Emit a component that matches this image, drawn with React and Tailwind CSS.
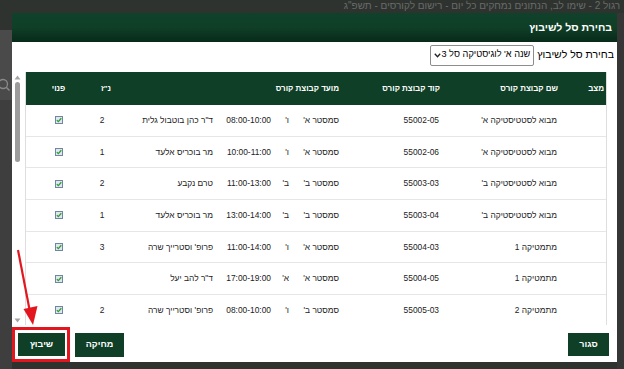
import React from 'react'

const ROWS = [
  { name: "מבוא לסטטיסטיקה א'", code: '55002-05', sem: "סמסטר א'", day: "ו'", time: '08:00-10:00', lect: 'ד"ר כהן בוטבול גלית', nz: '2' },
  { name: "מבוא לסטטיסטיקה א'", code: '55002-06', sem: "סמסטר א'", day: "ו'", time: '10:00-11:00', lect: 'מר בוכריס אלעד', nz: '1' },
  { name: "מבוא לסטטיסטיקה ב'", code: '55003-03', sem: "סמסטר ב'", day: "ב'", time: '11:00-13:00', lect: 'טרם נקבע', nz: '2' },
  { name: "מבוא לסטטיסטיקה ב'", code: '55003-04', sem: "סמסטר ב'", day: "ב'", time: '13:00-14:00', lect: 'מר בוכריס אלעד', nz: '1' },
  { name: 'מתמטיקה 1', code: '55004-03', sem: "סמסטר א'", day: "ו'", time: '11:00-14:00', lect: "פרופ' וסטרייך שרה", nz: '3' },
  { name: 'מתמטיקה 1', code: '55004-05', sem: "סמסטר א'", day: "א'", time: '17:00-19:00', lect: 'ד"ר להב יעל', nz: '' },
  { name: 'מתמטיקה 2', code: '55005-03', sem: "סמסטר ב'", day: "ו'", time: '08:00-10:00', lect: "פרופ' וסטרייך שרה", nz: '2' },
]

const GRID = 'grid grid-cols-[37px_118px_100px_56px_18px_56px_92px_54px_33px_18px]'

function Check() {
  return (
    <svg width="8" height="8" viewBox="0 0 8 8" className="inline-block">
      <rect x="0.5" y="0.5" width="7" height="7" fill="#dfe7ef" stroke="#6f85a0" />
      <path d="M1.8 4.1 L3.3 5.6 L6.3 2.2" fill="none" stroke="#2f9e2f" strokeWidth="1.3" />
    </svg>
  )
}

export default function App() {
  return (
    <div className="relative w-[624px] h-[369px] overflow-hidden bg-[#2f3330] font-['Liberation_Sans',Arial,sans-serif]">
      {/* page behind the dialog */}
      <div dir="rtl" className="h-[13px] pr-[4px] text-[10px] leading-[12px] text-[#686c69] whitespace-nowrap">
        רגול 2 - שימו לב, הנתונים נמחקים כל יום - רישום לקורסים - תשפ"ג
      </div>
      <div className="flex h-[356px]">
        <div className="w-[12px] flex flex-col">
          <div className="h-[17px] bg-[#2f3330]" />
          <div className="h-[70px] bg-[#4a4a4a] relative">
            <svg width="14" height="14" viewBox="0 0 14 14" className="absolute left-[-3px] top-[48px]">
              <circle cx="6" cy="6" r="4.5" fill="none" stroke="#8a8a8a" strokeWidth="1.3" />
              <path d="M9.2 9.2 L12.5 12.5" stroke="#8a8a8a" strokeWidth="1.5" />
            </svg>
          </div>
          <div className="flex-1 bg-[#3e3e3e]" />
        </div>
        <div className="flex-1" />
        <div className="w-[7px] bg-[#363636]" />
      </div>

      {/* dialog */}
      <div dir="rtl" className="absolute left-[12px] top-[13px] w-[605px] h-[349px] bg-white flex flex-col">
        <div className="h-[29px] bg-gradient-to-b from-[#10412a] via-[#0f3f27] to-[#082a19] flex items-center pr-[5px]">
          <span className="text-white font-bold text-[10.5px]">בחירת סל לשיבוץ</span>
        </div>

        <div className="mt-[2px] h-[22px] flex items-center gap-[3px] pr-[3px]">
          <span className="text-[10.5px] text-black whitespace-nowrap">בחירת סל לשיבוץ</span>
          <div className="w-[104px] h-[21px] border border-[#8d8d8d] rounded-[2px] flex items-center justify-between pr-[3px] pl-[3px] overflow-hidden">
            <span className="text-[9.2px] text-black whitespace-nowrap">שנה א' לוגיסטיקה סל 3</span>
            <svg width="7" height="5" viewBox="0 0 7 5" className="shrink-0">
              <path d="M0.8 0.8 L3.5 3.8 L6.2 0.8" fill="none" stroke="#222" strokeWidth="1.3" />
            </svg>
          </div>
        </div>

        <div className="mt-[6px] h-[253px] flex pr-[10px]">
          <div className="w-[582px] overflow-hidden border-x border-[#dedede]">
            <div className={`${GRID} h-[33px] bg-[#0f3f27] items-center text-white font-bold text-[8px] whitespace-nowrap`}>
              <div className="pr-[2px]">מצב</div>
              <div className="pr-[11px]">שם קבוצת קורס</div>
              <div className="pr-[11px]">קוד קבוצת קורס</div>
              <div className="pr-[12px]">מועד קבוצת קורס</div>
              <div />
              <div />
              <div />
              <div className="text-center pl-[8px]">נ"ז</div>
              <div className="text-center">פנוי</div>
              <div />
            </div>
            {ROWS.map((r, i) => (
              <div key={i} className={`${GRID} h-[31.7px] items-center border-b border-[#e6e6e6] text-[8.4px] text-[#222] whitespace-nowrap`}>
                <div />
                <div className="pr-[12px]">{r.name}</div>
                <div className="pr-[12px]">{r.code}</div>
                <div className="pr-[12px]">{r.sem}</div>
                <div className="pr-[6px]">{r.day}</div>
                <div className="pr-[6px]">{r.time}</div>
                <div className="pr-[8px]">{r.lect}</div>
                <div className="text-center">{r.nz}</div>
                <div className="flex justify-center"><Check /></div>
                <div />
              </div>
            ))}
          </div>
          <div className="w-[13px] flex flex-col items-center pr-[2px] pt-[3px] pb-[2px]">
            <svg width="7" height="5" viewBox="0 0 7 5"><path d="M3.5 0.5 L6.5 4.5 L0.5 4.5 Z" fill="#a5a5a5" /></svg>
            <div className="mt-[2px] w-[5px] h-[80px] rounded-full bg-[#9c9c9c]" />
            <div className="flex-1" />
            <svg width="7" height="5" viewBox="0 0 7 5"><path d="M0.5 0.5 L6.5 0.5 L3.5 4.5 Z" fill="#a5a5a5" /></svg>
          </div>
        </div>

        <div className="flex-1 flex justify-between items-start pt-[8px] pr-[8px] pl-[6px]">
          <button className="h-[23px] w-[41px] bg-[#0f3f27] text-white text-[9px] font-semibold">סגור</button>
          <div className="flex gap-[10px]">
            <button className="h-[24px] w-[49px] bg-[#0f3f27] text-white text-[9px] font-semibold">מחיקה</button>
            <button className="h-[23px] w-[47px] bg-[#0f3f27] text-white text-[9px] font-semibold">שיבוץ</button>
          </div>
        </div>
      </div>

      {/* annotation */}
      <div className="absolute left-[12px] top-[327px] w-[58px] h-[35px] border-[3px] border-[#e3161f]" />
      <svg className="absolute left-0 top-0" width="624" height="369" viewBox="0 0 624 369">
        <path d="M18 250 L30 312" stroke="#e3161f" strokeWidth="2.2" />
        <path d="M23.5 309 L33 325 L37.5 306 Z" fill="#e3161f" />
      </svg>
    </div>
  )
}
